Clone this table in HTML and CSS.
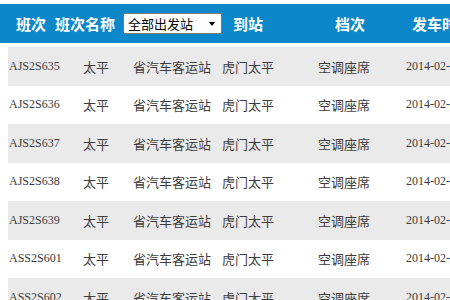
FILE: index.html
```html
<!DOCTYPE html>
<html lang="zh">
<head>
<meta charset="utf-8">
<link rel="stylesheet" href="styles.css">
</head>
<body>
<div class="page">
  <div class="head">
    <span class="h">班次</span>
    <span class="h">班次名称</span>
    <span class="sel-cell"><span class="sel"><span class="sel-text">全部出发站</span><span class="arrow"></span></span></span>
    <span class="h">到站</span>
    <span class="h">档次</span>
    <span class="h">发车时间</span>
  </div>
  <div class="rows">
    <div class="row odd"><span class="code">AJS2S635</span><span>太平</span><span>省汽车客运站</span><span>虎门太平</span><span>空调座席</span><span class="code">2014-02-08 07:00</span></div>
    <div class="row"><span class="code">AJS2S636</span><span>太平</span><span>省汽车客运站</span><span>虎门太平</span><span>空调座席</span><span class="code">2014-02-08 07:30</span></div>
    <div class="row odd"><span class="code">AJS2S637</span><span>太平</span><span>省汽车客运站</span><span>虎门太平</span><span>空调座席</span><span class="code">2014-02-08 08:00</span></div>
    <div class="row"><span class="code">AJS2S638</span><span>太平</span><span>省汽车客运站</span><span>虎门太平</span><span>空调座席</span><span class="code">2014-02-08 08:30</span></div>
    <div class="row odd"><span class="code">AJS2S639</span><span>太平</span><span>省汽车客运站</span><span>虎门太平</span><span>空调座席</span><span class="code">2014-02-08 09:00</span></div>
    <div class="row"><span class="code">ASS2S601</span><span>太平</span><span>省汽车客运站</span><span>虎门太平</span><span>空调座席</span><span class="code">2014-02-08 09:30</span></div>
    <div class="row odd"><span class="code">ASS2S602</span><span>太平</span><span>省汽车客运站</span><span>虎门太平</span><span>空调座席</span><span class="code">2014-02-08 10:00</span></div>
  </div>
</div>
</body>
</html>
```

FILE: styles.css
```css
html, body {
  margin: 0;
  padding: 0;
  background: #ffffff;
  overflow: hidden;
}
.page {
  width: 450px;
  height: 300px;
  overflow: hidden;
  padding-top: 4px;
  box-sizing: border-box;
  font-family: "Noto Sans CJK SC", "Noto Sans", sans-serif;
}
.head {
  height: 39px;
  background: #0b87ca;
  display: grid;
  grid-template-columns: 39px 68px 110px 102px 77px 1fr;
  padding-left: 16px;
  align-items: center;
  white-space: nowrap;
  color: #ffffff;
  overflow: hidden;
}
.h {
  font-size: 15px;
  font-weight: 700;
  line-height: 20px;
  overflow: hidden;
}
.sel-cell {
  display: flex;
}
.sel {
  width: 99px;
  height: 21px;
  box-sizing: border-box;
  background: #ffffff;
  border: 1px solid #7a7a7a;
  display: flex;
  align-items: center;
  justify-content: space-between;
  padding: 0 6px 0 4px;
}
.sel-text {
  color: #000000;
  font-size: 13px;
  line-height: 17px;
}
.arrow {
  width: 0;
  height: 0;
  border-left: 3.5px solid transparent;
  border-right: 3.5px solid transparent;
  border-top: 4px solid #000000;
}
.rows {
  margin-top: 4px;
  margin-left: 8px;
}
.row {
  height: 38.5px;
  display: grid;
  grid-template-columns: 75px 50px 89px 96px 88px 1fr;
  align-items: center;
  white-space: nowrap;
  font-size: 13px;
  color: #3c3c3c;
  background: #ffffff;
}
.row.odd {
  background: #ebeaea;
}
.row > span {
  overflow: hidden;
}
.row > span:first-child {
  padding-left: 1px;
}
.code {
  font-family: "Liberation Serif", serif;
  font-size: 12px;
  color: #3a3a3a;
}
```
